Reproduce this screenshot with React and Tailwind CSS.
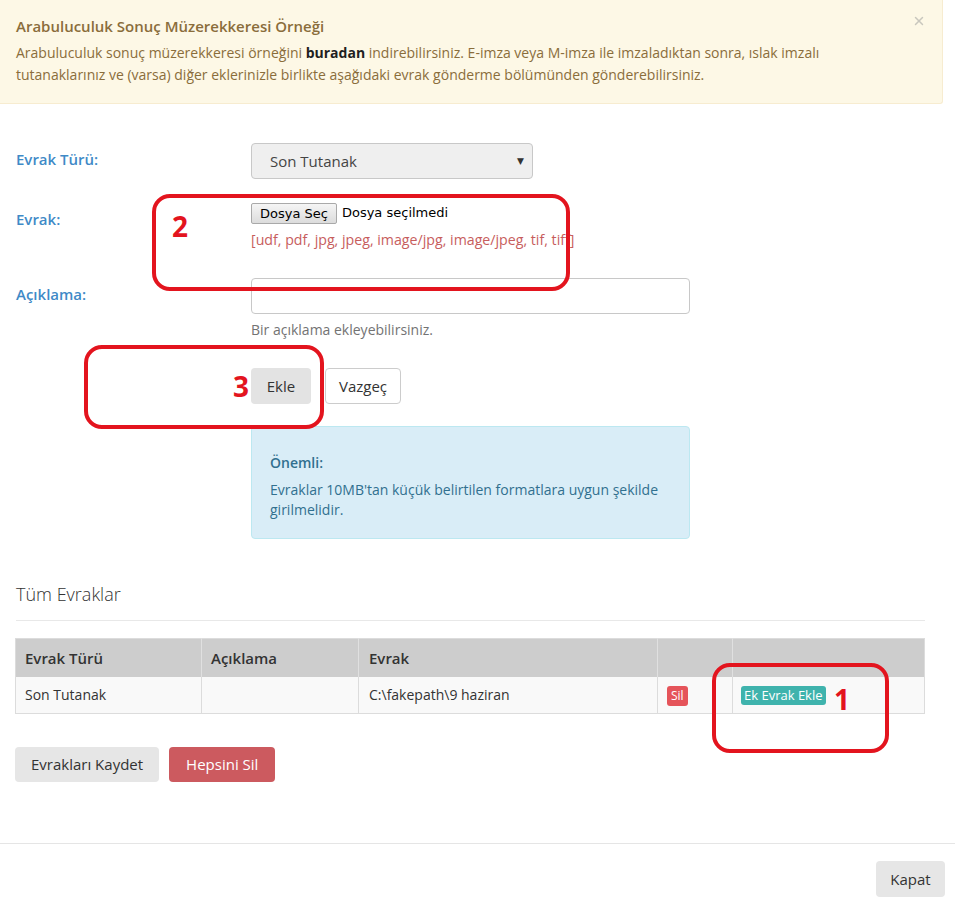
import { X } from 'lucide-react'

const font = { fontFamily: '"Open Sans", "DejaVu Sans", sans-serif' }

function Annotation({ className, num, numClass }) {
  return (
    <>
      <div className={`absolute border-[4px] border-[#e3141e] rounded-[18px] pointer-events-none ${className}`} />
      <span className={`absolute text-[28px] font-bold leading-none text-[#e3141e] ${numClass}`}>{num}</span>
    </>
  )
}

function FormRow({ label, children, labelPad = 'pt-[6px]' }) {
  return (
    <div className="flex">
      <div className={`w-[251px] shrink-0 pl-4 ${labelPad}`}>
        <span className="text-[15px] leading-5 font-semibold text-[#3f8ac7]">{label}</span>
      </div>
      <div className="flex-1">{children}</div>
    </div>
  )
}

export default function App() {
  return (
    <div className="relative w-[955px] h-[907px] bg-white text-[14px] text-[#333] overflow-hidden" style={font}>
      {/* Warning alert */}
      <div className="relative w-[943px] bg-[#fdf8e6] border-r border-b border-[#f7ecd0] rounded-br-[3px] pl-4 pr-10 pt-4 pb-[17px] text-[#8a6d3b]">
        <div className="text-[15px] font-semibold leading-5">Arabuluculuk Sonuç Müzerekkeresi Örneği</div>
        <p className="mt-[6px] leading-[22px]">
          Arabuluculuk sonuç müzerekkeresi örneğini <b className="text-[#1f1f1f]">buradan</b> indirebilirsiniz. E-imza veya M-imza ile imzaladıktan sonra, ıslak imzalı
          <br />
          tutanaklarınız ve (varsa) diğer eklerinizle birlikte aşağıdaki evrak gönderme bölümünden gönderebilirsiniz.
        </p>
        <X className="absolute right-[16px] top-[14px] w-[14px] h-[14px] text-[#c9c7bd]" strokeWidth={2.5} />
      </div>

      {/* Form */}
      <div className="mt-[39px] flex flex-col">
        <FormRow label="Evrak Türü:">
          <div className="w-[282px] h-[36px] rounded-[4px] border border-[#c8c8c8] bg-[#efefef] flex items-center justify-between pl-[18px] pr-[8px] text-[15px] text-[#444]">
            <span>Son Tutanak</span>
            <span className="text-[9px] text-[#333]">▼</span>
          </div>
        </FormRow>

        <div className="mt-[24px]">
          <FormRow label="Evrak:">
            <div className="flex items-center h-[20px] leading-5" style={{ fontFamily: '"DejaVu Sans", sans-serif' }}>
              <span className="h-[21px] px-[8px] border border-[#a9a9a9] bg-gradient-to-b from-[#f5f5f5] to-[#dcdcdc] text-[13px] leading-[19px] text-black rounded-[2px]">Dosya Seç</span>
              <span className="ml-[5px] text-[13px] text-black">Dosya seçilmedi</span>
            </div>
            <div className="mt-[7px] leading-5 text-[14.2px] text-[#c75d5d]">[udf, pdf, jpg, jpeg, image/jpg, image/jpeg, tif, tiff]</div>
          </FormRow>
        </div>

        <div className="mt-[28px]">
          <FormRow label="Açıklama:">
            <div className="w-[439px] h-[36px] rounded-[4px] border border-[#c8c8c8] bg-white" />
            <div className="mt-[6px] leading-5 text-[#737373]">Bir açıklama ekleyebilirsiniz.</div>
            <div className="mt-[28px] flex gap-[14px]">
              <button className="h-[36px] w-[60px] rounded-[4px] bg-[#e3e3e3] text-[15px] text-[#333]">Ekle</button>
              <button className="h-[36px] w-[76px] rounded-[4px] bg-white border border-[#cccccc] text-[15px] text-[#333]">Vazgeç</button>
            </div>
            <div className="mt-[22px] w-[439px] rounded-[4px] border border-[#bce8f1] bg-[#d9edf7] text-[#31708f] pt-[26px] pb-[18px] px-[18px]">
              <div className="font-semibold leading-5">Önemli:</div>
              <p className="mt-[7px] leading-5">
                Evraklar 10MB'tan küçük belirtilen formatlara uygun şekilde
                <br />
                girilmelidir.
              </p>
            </div>
          </FormRow>
        </div>
      </div>

      {/* All documents */}
      <div className="mt-[42px] px-4">
        <h3 className="text-[18px] font-light leading-[26px] text-[#333]">Tüm Evraklar</h3>
        <div className="mt-[13px] w-[909px] border-t border-[#e8e8e8]" />
      </div>

      <div className="mt-[17px] ml-[15px] w-[910px]">
        <table className="w-full border-collapse border border-[#dcdcdc]">
          <thead>
            <tr className="bg-[#cdcdcd] h-[38px] text-left text-[15px]">
              <th className="w-[186px] pl-[9px] font-semibold border-r border-[#e0e0e0]">Evrak Türü</th>
              <th className="w-[157px] pl-[9px] font-semibold border-r border-[#e0e0e0]">Açıklama</th>
              <th className="w-[299px] pl-[10px] font-semibold border-r border-[#e0e0e0]">Evrak</th>
              <th className="w-[75px] border-r border-[#e0e0e0]"></th>
              <th></th>
            </tr>
          </thead>
          <tbody>
            <tr className="bg-[#f9f9f9] h-[37px]">
              <td className="pl-[9px] border-r border-[#dcdcdc]">Son Tutanak</td>
              <td className="border-r border-[#dcdcdc]"></td>
              <td className="pl-[10px] border-r border-[#dcdcdc]">C:\fakepath\9 haziran</td>
              <td className="pl-[9px] border-r border-[#dcdcdc]">
                <span className="inline-block rounded-[3px] bg-[#e5545a] text-white text-[12px] leading-[20px] px-[4px]">Sil</span>
              </td>
              <td className="pl-[8px]">
                <span className="inline-block rounded-[3px] bg-[#3fb3ad] text-white text-[13px] leading-[19px] px-[3px]">Ek Evrak Ekle</span>
              </td>
            </tr>
          </tbody>
        </table>
      </div>

      <div className="mt-[33px] ml-[15px] flex gap-[10px]">
        <button className="h-[35px] px-[16px] rounded-[4px] bg-[#e6e6e6] text-[15px] text-[#333]">Evrakları Kaydet</button>
        <button className="h-[35px] px-[17px] rounded-[4px] bg-[#cc5a5f] text-[15px] text-white">Hepsini Sil</button>
      </div>

      {/* Modal footer */}
      <div className="mt-[61px] border-t border-[#e5e5e5] flex justify-end pt-[17px] pr-[10px]">
        <button className="h-[36px] w-[69px] rounded-[4px] bg-[#e6e6e6] text-[15px] text-[#333]">Kapat</button>
      </div>

      {/* Red annotations */}
      <Annotation className="left-[152px] top-[194px] w-[418px] h-[97px]" num="2" numClass="left-[172px] top-[212px]" />
      <Annotation className="left-[84px] top-[345px] w-[240px] h-[84px]" num="3" numClass="left-[233px] top-[372px]" />
      <Annotation className="left-[712px] top-[663px] w-[177px] h-[90px]" num="1" numClass="left-[834px] top-[685px]" />
    </div>
  )
}
